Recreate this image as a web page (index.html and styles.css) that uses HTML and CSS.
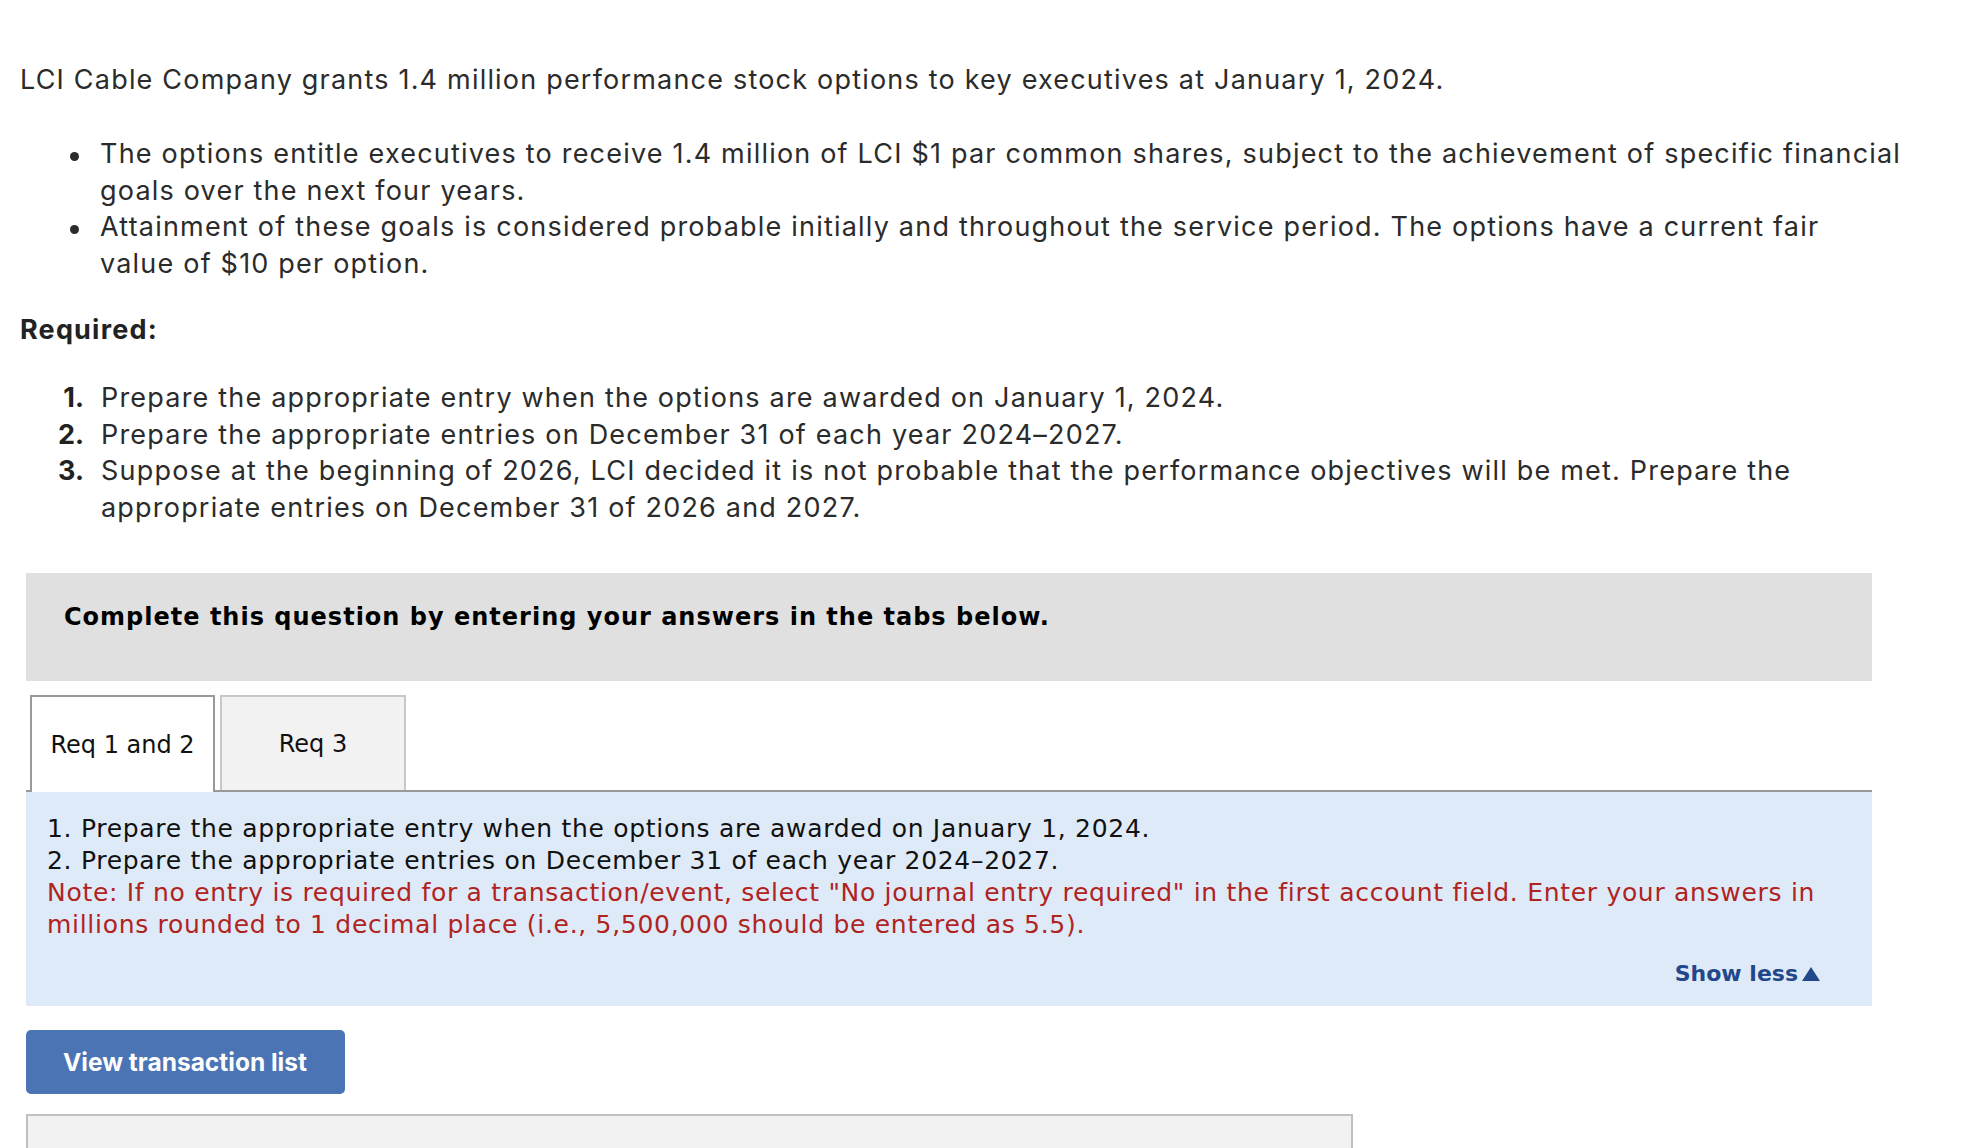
FILE: index.html
```html
<!DOCTYPE html>
<html lang="en">
<head>
<meta charset="utf-8">
<title>LCI Cable Company</title>
<link rel="stylesheet" href="styles.css">
</head>
<body>
<main class="page">
  <section class="question">
    <p class="intro">LCI Cable Company grants 1.4 million performance stock options to key executives at January 1, 2024.</p>
    <ul class="bullets">
      <li><span>The options entitle executives to receive 1.4 million of LCI $1 par common shares, subject to the achievement of specific financial<br>goals over the next four years.</span></li>
      <li><span>Attainment of these goals is considered probable initially and throughout the service period. The options have a current fair<br>value of $10 per option.</span></li>
    </ul>
    <h3 class="required">Required:</h3>
    <ol class="reqs">
      <li><span class="num">1.</span><span>Prepare the appropriate entry when the options are awarded on January 1, 2024.</span></li>
      <li><span class="num">2.</span><span>Prepare the appropriate entries on December 31 of each year 2024–2027.</span></li>
      <li><span class="num">3.</span><span>Suppose at the beginning of 2026, LCI decided it is not probable that the performance objectives will be met. Prepare the<br>appropriate entries on December 31 of 2026 and 2027.</span></li>
    </ol>
  </section>

  <section class="work">
    <div class="instruct">Complete this question by entering your answers in the tabs below.</div>

    <div class="tabs">
      <div class="tab active">Req 1 and 2</div>
      <div class="tab">Req 3</div>
    </div>

    <div class="panel">
      <div class="panel-text">
        <div>1. Prepare the appropriate entry when the options are awarded on January 1, 2024.</div>
        <div>2. Prepare the appropriate entries on December 31 of each year 2024–2027.</div>
        <div class="note">Note: If no entry is required for a transaction/event, select "No journal entry required" in the first account field. Enter your answers in<br>millions rounded to 1 decimal place (i.e., 5,500,000 should be entered as 5.5).</div>
      </div>
      <div class="show-row"><span class="show-less">Show less<span class="tri"></span></span></div>
    </div>

    <button class="view-btn" type="button">View transaction list</button>

    <div class="journal"></div>
  </section>
</main>
</body>
</html>
```
FILE: styles.css
```css
* { box-sizing: border-box; }

body {
  margin: 0;
  background: #ffffff;
  font-family: Inter, "Noto Sans", sans-serif;
  color: #2b2b2b;
}

.page {
  padding: 62px 0 0 20px;
}

.question {
  font-size: 27px;
  line-height: 36.4px;
  letter-spacing: 1.2px;
}

.intro {
  margin: 0;
  white-space: nowrap;
}

.bullets {
  list-style: none;
  margin: 38px 0 0 0;
  padding: 0;
}

.bullets li {
  display: flex;
  white-space: nowrap;
}

.bullets li::before {
  content: "";
  flex: none;
  width: 9px;
  height: 9px;
  border-radius: 50%;
  background: #2b2b2b;
  margin: 16px 21px 0 50px;
}

.required {
  margin: 30px 0 0 0;
  font-size: 27px;
  line-height: 36.4px;
  font-weight: 700;
  color: #222;
}

.reqs {
  list-style: none;
  margin: 32px 0 0 0;
  padding: 0;
}

.reqs li {
  display: flex;
  white-space: nowrap;
}

.reqs .num {
  flex: none;
  width: 64px;
  margin-right: 17px;
  text-align: right;
  font-weight: 700;
  letter-spacing: 0;
  color: #222;
}

.work {
  margin-top: 47px;
  width: 1846px;
  margin-left: 6px;
  font-family: "DejaVu Sans", Verdana, sans-serif;
}

.instruct {
  background: #e0e0e0;
  padding: 29px 38px 49px;
  font-size: 24px;
  line-height: 30px;
  font-weight: 700;
  letter-spacing: 1px;
  color: #000;
}

.tabs {
  display: flex;
  gap: 5px;
  margin-top: 14px;
  padding-left: 4px;
  border-bottom: 2px solid #999999;
}

.tab {
  width: 186px;
  height: 95px;
  display: flex;
  align-items: center;
  justify-content: center;
  font-size: 24px;
  color: #111;
  background: #f2f2f2;
  border: 2px solid #c8c8c8;
  border-bottom: none;
}

.tab.active {
  width: 185px;
  background: #ffffff;
  border-color: #999999;
  margin-bottom: -2px;
  height: 97px;
}

.panel {
  background: #deeaf7;
  padding: 21px 52px 16px 21px;
}

.panel-text {
  font-size: 25px;
  line-height: 32px;
  letter-spacing: 0.7px;
  color: #111;
  white-space: nowrap;
}

.note {
  color: #b0231f;
}

.show-row {
  display: flex;
  justify-content: flex-end;
  margin-top: 17px;
}

.show-less {
  display: inline-flex;
  align-items: center;
  font-size: 22px;
  line-height: 32px;
  font-weight: 700;
  color: #22478a;
}

.tri {
  display: inline-block;
  width: 0;
  height: 0;
  margin-left: 4px;
  border-left: 9.5px solid transparent;
  border-right: 9.5px solid transparent;
  border-bottom: 14px solid #22478a;
}

.view-btn {
  display: block;
  margin-top: 24px;
  width: 319px;
  height: 64px;
  padding: 0 0 0 37px;
  text-align: left;
  border: none;
  border-radius: 5px;
  background: #4a74b4;
  color: #ffffff;
  font-family: Inter, "Noto Sans", sans-serif;
  font-size: 24.5px;
  font-weight: 700;
}

.journal {
  margin-top: 20px;
  width: 1327px;
  height: 120px;
  background: #f2f2f2;
  border: 2px solid #c0c0c0;
}
```
